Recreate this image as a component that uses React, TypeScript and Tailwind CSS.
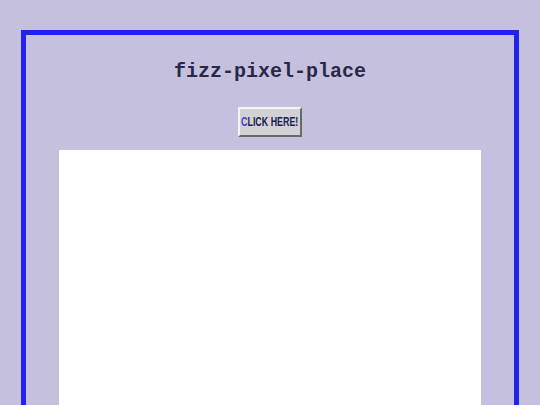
import React from "react";

export default function App() {
  return (
    <div className="min-h-[405px] h-[405px] overflow-hidden bg-[#c4c0de] pt-[30px]">
      <div className="mx-[21px] h-[400px] border-[5px] border-b-0 border-[#2222ee] flex flex-col items-center">
        <h1
          className="mt-[24px] text-[20px] leading-[26px] font-bold text-[#2a2848]"
          style={{ fontFamily: '"Liberation Mono", "Courier New", monospace' }}
        >
          fizz-pixel-place
        </h1>
        <button
          className="mt-[22px] w-[64px] h-[30px] bg-[#d2d2d4] border-2 border-t-[#f4f4f4] border-l-[#f4f4f4] border-r-[#6a6a6a] border-b-[#6a6a6a] flex items-center justify-center overflow-hidden"
        >
          <span
            className="inline-block whitespace-nowrap text-[12px] leading-[14px] font-bold text-[#1c1c52] scale-x-[0.74]"
            style={{ fontFamily: '"Liberation Sans", Arial, sans-serif' }}
          >
            <span className="text-[#3a3ae0]">C</span>LICK HERE!
          </span>
        </button>
        <div className="mt-[13px] w-[422px] flex-1 bg-white" />
      </div>
    </div>
  );
}
